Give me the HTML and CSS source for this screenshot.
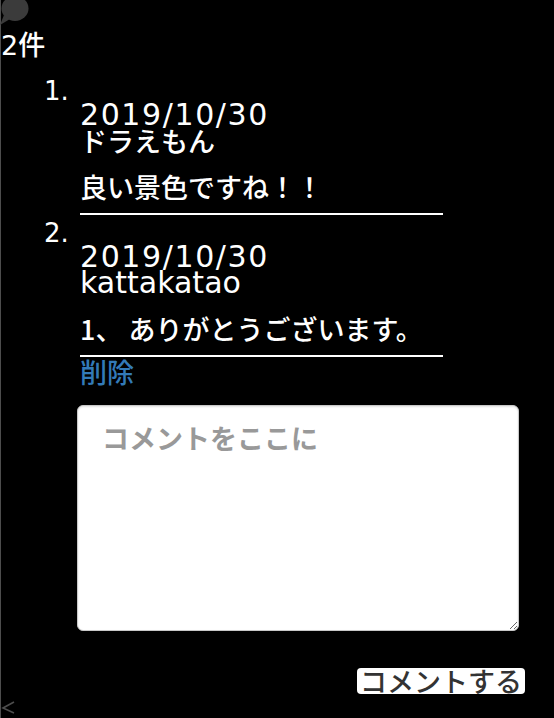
FILE: index.html
```html
<!DOCTYPE html>
<html lang="ja">
<head>
<meta charset="utf-8">
<title>コメント</title>
<link rel="stylesheet" href="styles.css">
</head>
<body>
<div class="page">
  <div class="bubble">
    <svg width="30" height="28" viewBox="0 0 30 28">
      <ellipse cx="15" cy="8.5" rx="13.5" ry="12.5" fill="#3b3b3b"/>
      <path d="M4 15 L0 25 L10 19 Z" fill="#3b3b3b"/>
    </svg>
  </div>
  <div class="count"><span class="en">2</span>件</div>
  <ol class="comments">
    <li class="comment">
      <span class="num">1.</span>
      <div class="body">
        <div class="date">2019/10/30</div>
        <div class="name jp">ドラえもん</div>
        <p class="text">良い景色ですね！！</p>
      </div>
    </li>
    <li class="comment">
      <span class="num">2.</span>
      <div class="body">
        <div class="date">2019/10/30</div>
        <div class="name en">kattakatao</div>
        <p class="text">1、 ありがとうございます。</p>
        <a class="delete" href="#">削除</a>
      </div>
    </li>
  </ol>
  <form class="form">
    <textarea class="field" placeholder="コメントをここに"></textarea>
    <button class="submit" type="button">コメントする</button>
  </form>
  <div class="back">
    <svg width="16" height="14" viewBox="0 0 16 14">
      <path d="M13 2 L2 8 L13 13" fill="none" stroke="#4d4d4d" stroke-width="1.6"/>
    </svg>
  </div>
</div>
</body>
</html>
```
FILE: styles.css
```css
html, body {
  margin: 0;
  padding: 0;
  background: #000;
}
body {
  color: #fff;
  font-family: "Noto Sans CJK JP", sans-serif;
  font-weight: 500;
}
.page {
  border-left: 1px solid #4d4d4d;
  min-height: 718px;
  box-sizing: border-box;
}
.bubble {
  height: 28px;
}
.bubble svg {
  display: block;
  margin-left: -1px;
}
.count {
  font-size: 27px;
  line-height: 32px;
  height: 32px;
}
.en {
  font-family: "DejaVu Sans", sans-serif;
}
.comments {
  list-style: none;
  margin: 0;
  padding: 19px 0 0 43px;
}
.comment {
  display: flex;
  margin-bottom: 6px;
}
.num {
  width: 36px;
  flex: none;
  font-family: "DejaVu Sans", sans-serif;
  font-size: 26px;
  line-height: 24px;
}
.body {
  width: 363px;
  margin-top: 23px;
}
.date {
  font-family: "DejaVu Sans", sans-serif;
  font-size: 30px;
  line-height: 26px;
  letter-spacing: 1.6px;
}
.name {
  line-height: 26px;
}
.name.jp {
  font-size: 27px;
}
.name.en {
  font-size: 30px;
}
.text {
  margin: 18px 0 0;
  font-size: 27px;
  line-height: 30px;
  padding-bottom: 11px;
  border-bottom: 2px solid #fff;
}
.delete {
  display: block;
  color: #337ab7;
  text-decoration: none;
  font-size: 27px;
  line-height: 30px;
}
.form {
  margin: 18px 0 0 76px;
  width: 448px;
  display: flex;
  flex-direction: column;
  align-items: flex-end;
}
.field {
  align-self: flex-start;
  width: 442px;
  height: 226px;
  box-sizing: border-box;
  margin: 0;
  padding: 17px 24px;
  border: 1px solid #c8c8c8;
  border-radius: 6px;
  background: #fff;
  box-shadow: inset 0 1px 2px rgba(0, 0, 0, 0.12);
  font-family: "Noto Sans CJK JP", sans-serif;
  font-size: 27px;
  line-height: 30px;
  font-weight: bold;
  color: #333;
}
.field::placeholder {
  color: #999;
}
.submit {
  margin-top: 37px;
  padding: 0 3px;
  border: none;
  border-radius: 4px;
  background: #fff;
  color: #333;
  font-family: "Noto Sans CJK JP", sans-serif;
  font-weight: 500;
  font-size: 27px;
  line-height: 26px;
  height: 26px;
}
.back {
  margin-top: 6px;
}
.back svg {
  display: block;
}
```
